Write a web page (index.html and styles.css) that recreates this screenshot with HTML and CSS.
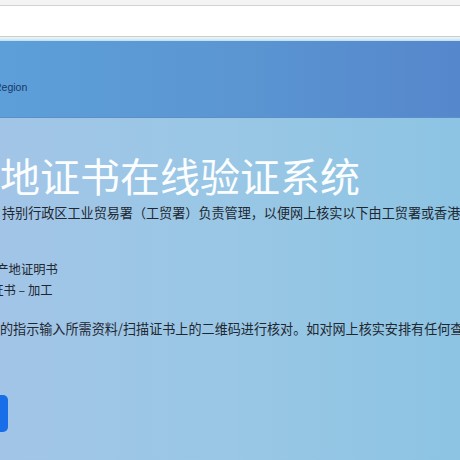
FILE: index.html
```html
<!DOCTYPE html>
<html lang="zh-CN">
<head>
<meta charset="utf-8">
<link rel="stylesheet" href="styles.css">
</head>
<body>
<div class="topbar"></div>
<div class="addr"></div>
<div class="glow"></div>
<header class="header">
  <span class="brand">Region</span>
</header>
<main class="hero">
  <h1 class="title">地证书在线验证系统</h1>
  <p class="lead">持别行政区工业贸易署（工贸署）负责管理，以便网上核实以下由工贸署或香港</p>
  <ul class="certs">
    <li class="cert cert-a">原产地证明书</li>
    <li class="cert cert-b">产地来源证书 – 加工</li>
  </ul>
  <p class="note">的指示输入所需资料/扫描证书上的二维码进行核对。如对网上核实安排有任何查询</p>
  <div class="btn">开始</div>
</main>
</body>
</html>
```
FILE: styles.css
```css
html, body {
  margin: 0;
  padding: 0;
}
body {
  width: 460px;
  height: 460px;
  overflow: hidden;
  font-family: "Noto Sans CJK SC", "Liberation Sans", sans-serif;
  background: #9cc6e5;
}
.topbar {
  height: 5px;
  background: #f4f4f4;
  border-bottom: 1px solid #d2d2d2;
}
.addr {
  height: 30px;
  background: #ffffff;
  border-bottom: 1px solid #cdcdc6;
}
.glow {
  height: 4px;
  background: linear-gradient(180deg, #eef7fb, #bfe0f2);
}
.header {
  height: 77px;
  background: linear-gradient(90deg, #5c9fd9 0%, #5b96d2 50%, #5587cc 100%);
  display: flex;
  align-items: center;
  padding-top: 16px;
  box-sizing: border-box;
  border-bottom: 1px solid #5a8fc8;
}
.brand {
  font-family: "Liberation Sans", Arial, sans-serif;
  font-size: 10.5px;
  color: #173766;
  margin-left: -6px;
}
.hero {
  height: 342px;
  background: linear-gradient(90deg, #a2c5e7 0%, #99c7e5 50%, #8dc4e3 100%);
  padding-top: 33px;
  box-sizing: border-box;
}
.title {
  margin: 0;
  font-size: 40px;
  line-height: 48px;
  font-weight: 400;
  color: #fbfdff;
  white-space: nowrap;
}
.lead {
  margin: 4px 0 0 2px;
  font-size: 13.1px;
  line-height: 20px;
  color: #1f2730;
  white-space: nowrap;
}
.certs {
  list-style: none;
  margin: 36px 0 0 0;
  padding: 0;
}
.cert {
  font-size: 12.3px;
  line-height: 21px;
  color: #1f2730;
  white-space: nowrap;
}
.cert-a {
  margin-left: -16px;
}
.cert-b {
  margin-left: -58px;
}
.note {
  margin: 18px 0 0 0;
  font-size: 13.1px;
  line-height: 20px;
  color: #1f2730;
  white-space: nowrap;
}
.btn {
  margin-top: 56px;
  margin-left: -92px;
  width: 100px;
  height: 37px;
  border-radius: 5px;
  background: #176ee8;
  color: #fff;
}
```
